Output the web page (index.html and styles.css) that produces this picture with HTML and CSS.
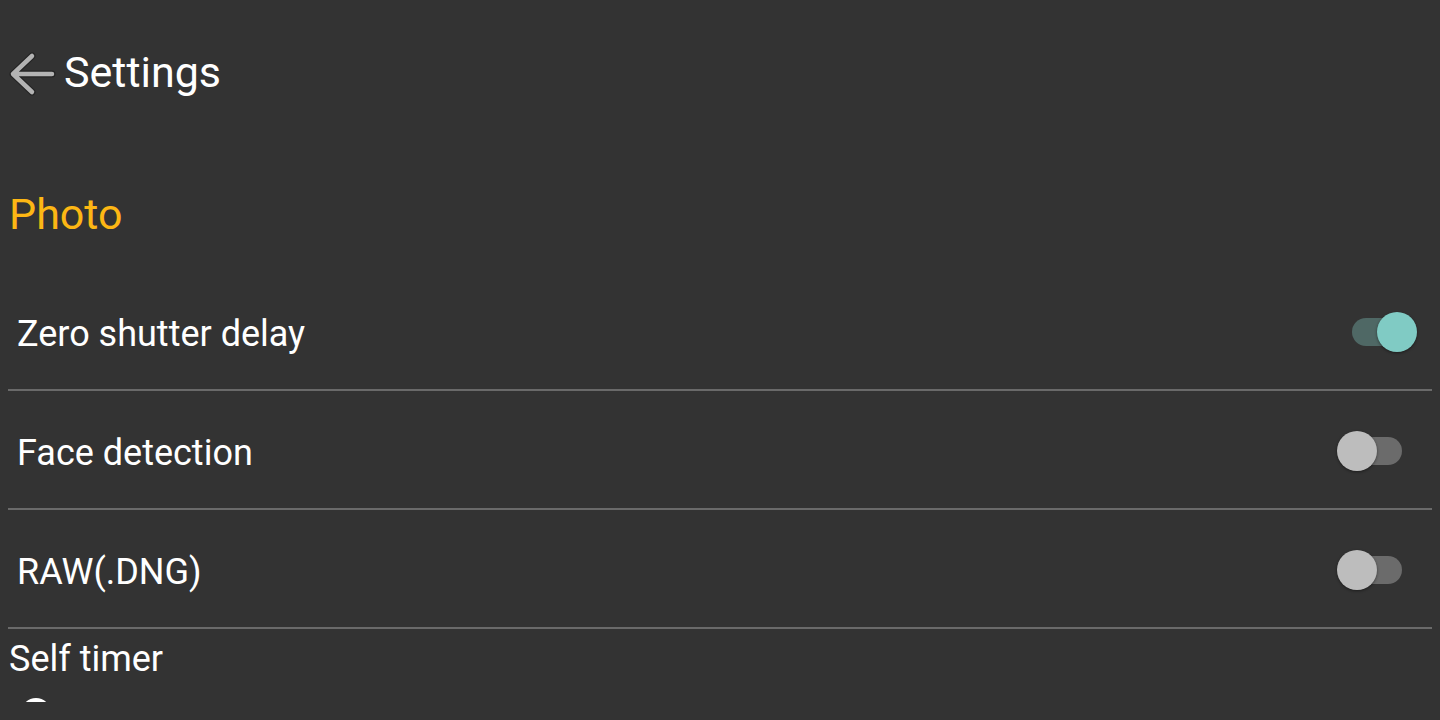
FILE: index.html
```html
<!DOCTYPE html>
<html lang="en">
	<head>
		<meta charset="UTF-8" />
		<title>Settings</title>
		<link rel="stylesheet" href="styles.css">
	</head>
	<body>
		<div class="toolbar">
			<svg class="back" width="48" height="48" viewBox="0 0 48 48">
				<path class="back-edge" d="M24 7 L5 25 L24 43 M5 25 H44" />
				<path class="back-line" d="M24 7 L5 25 L24 43 M5 25 H44" />
			</svg>
			<span class="title">Settings</span>
		</div>

		<div class="category">Photo</div>

		<div class="pref">
			<span class="pref-title">Zero shutter delay</span>
			<div class="switch on"><div class="track"></div><div class="thumb"></div></div>
		</div>
		<div class="pref">
			<span class="pref-title">Face detection</span>
			<div class="switch"><div class="track"></div><div class="thumb"></div></div>
		</div>
		<div class="pref">
			<span class="pref-title">RAW(.DNG)</span>
			<div class="switch"><div class="track"></div><div class="thumb"></div></div>
		</div>

		<div class="timer">
			<div class="timer-title">Self timer</div>
			<div class="radio-clip"><div class="radio"></div></div>
		</div>
	</body>
</html>
```

FILE: styles.css
```css
html,
body {
	height: 100%;
}
body {
	margin: 0;
	background-color: #333333;
	color: #ffffff;
	font-family: Roboto, "Liberation Sans", sans-serif;
	overflow: hidden;
}
.toolbar {
	display: flex;
	align-items: center;
	height: 144px;
	padding-left: 8px;
	box-sizing: border-box;
}
.back {
	display: block;
	margin-top: 2px;
}
.back path {
	fill: none;
	stroke-linecap: round;
	stroke-linejoin: round;
}
.back-edge {
	stroke: #242424;
	stroke-width: 7;
}
.back-line {
	stroke: #b3b3b3;
	stroke-width: 4.5;
}
.title {
	margin-left: 8px;
	font-size: 43px;
	line-height: 50px;
}
.category {
	margin-top: 45px;
	padding-left: 9px;
	font-size: 43px;
	line-height: 50px;
	color: #fdb714;
}
.pref {
	display: flex;
	align-items: center;
	justify-content: space-between;
	margin: 0 8px;
	padding: 40px 15px 33px 9px;
	border-bottom: 2px solid #6a6a6a;
}
.category + .pref {
	margin-top: 33px;
}
.pref-title {
	font-size: 36px;
	line-height: 44px;
}
.switch {
	position: relative;
	width: 80px;
	height: 40px;
	margin-bottom: 4px;
}
.track {
	position: absolute;
	left: 15px;
	right: 15px;
	top: 6px;
	height: 28px;
	border-radius: 14px;
	background-color: #6b6b6b;
}
.thumb {
	position: absolute;
	left: 0;
	top: 0;
	width: 40px;
	height: 40px;
	border-radius: 50%;
	background-color: #bdbdbd;
	box-shadow: 0 1px 3px rgba(0, 0, 0, 0.45);
}
.switch.on .track {
	background-color: #4f6865;
}
.switch.on .thumb {
	left: 40px;
	background-color: #80cbc4;
}
.timer {
	padding: 10px 0 0 9px;
}
.timer-title {
	font-size: 36px;
	line-height: 40px;
}
.radio-clip {
	width: 30px;
	height: 4px;
	margin: 19px 0 0 12px;
	overflow: hidden;
}
.radio {
	width: 30px;
	height: 30px;
	border-radius: 50%;
	background-color: #ffffff;
}
```
